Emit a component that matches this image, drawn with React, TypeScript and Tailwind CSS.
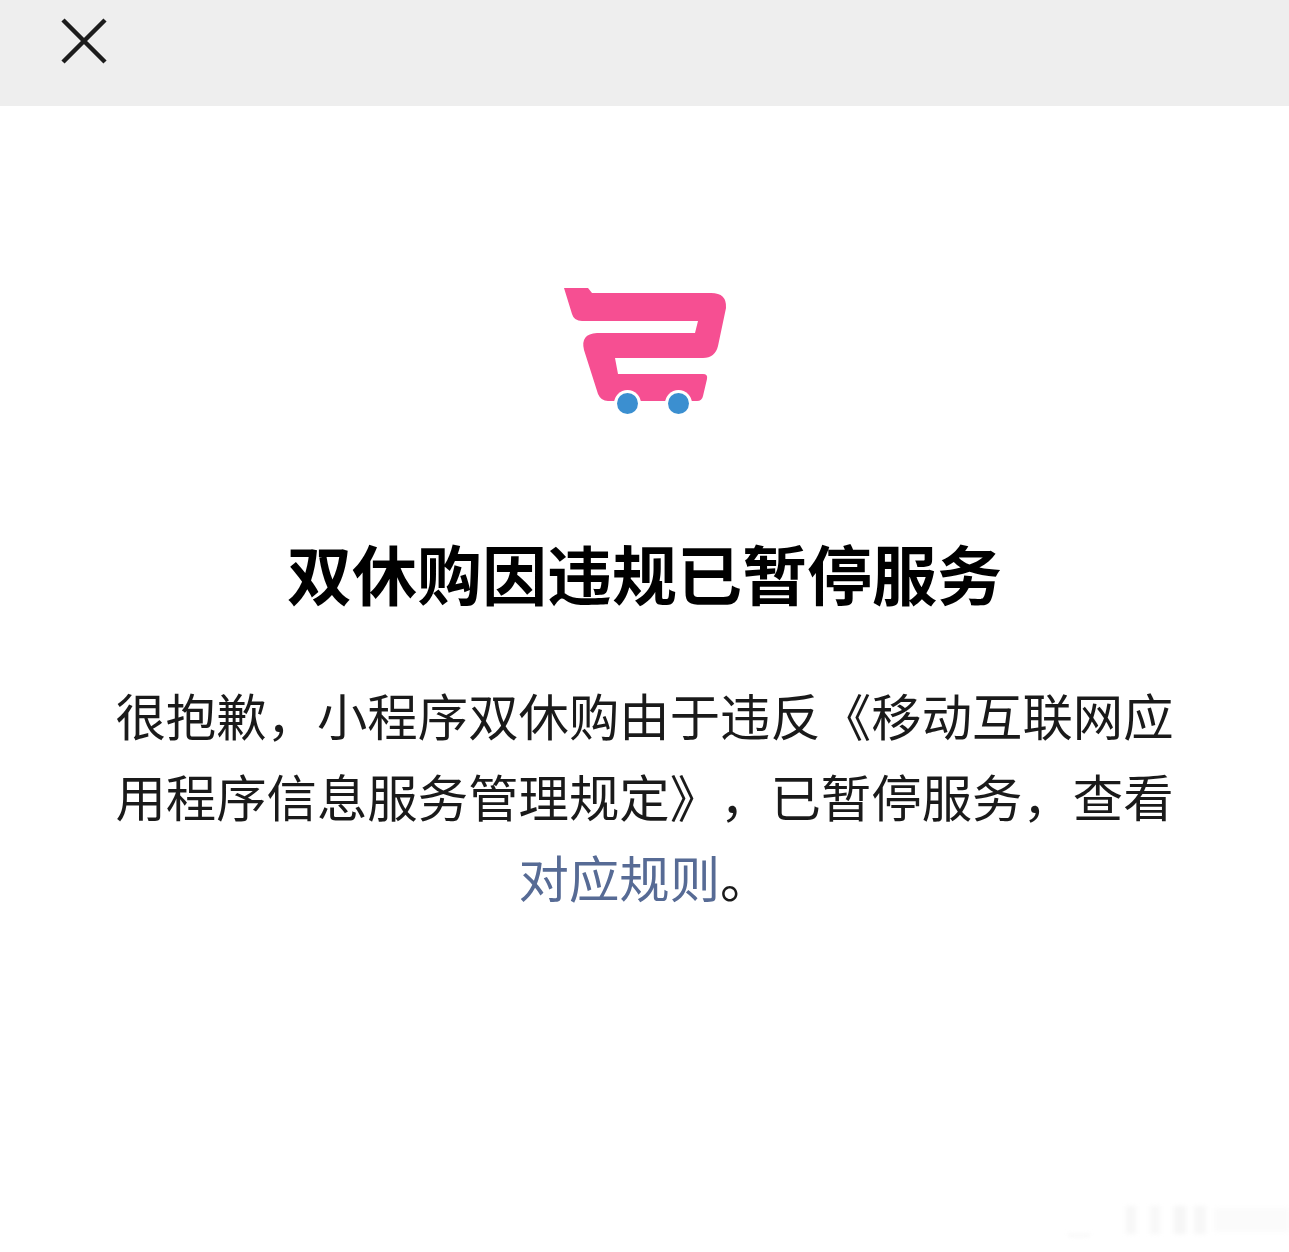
const Logo = () => (
  <svg width="170" height="130" viewBox="560 284 170 130" className="block">
    <path
      d="M564 288 L588 288 L592 293 L711 293 Q727 293 726 308 L718 346 Q715 358 703 358 L615 358 L618 374 L703 374 Q708 374 707 379 L703 396 Q702 401 697 401 L608 401 Q601 401 598 394 L584 350 Q580 334 597 333 L695 333 L698 321 L582 321 Q574 321 572 314 Z"
      fill="#f64f92"
    />
    <circle cx="627.5" cy="403.5" r="13.5" fill="#fff" />
    <circle cx="678.5" cy="403.5" r="13.5" fill="#fff" />
    <circle cx="627.5" cy="403.5" r="10.5" fill="#3b8fd0" />
    <circle cx="678.5" cy="403.5" r="10.5" fill="#3b8fd0" />
  </svg>
);

export default function App() {
  return (
    <div className="relative min-h-[1252px] bg-white font-['Noto_Sans_CJK_SC','Noto_Sans',sans-serif] [text-spacing-trim:space-all]">
      <div className="h-[106px] bg-[#eeeeee] pl-[61px] pt-[18px]">
        <svg width="46" height="46" viewBox="0 0 46 46" className="block">
          <path d="M2 2 L44 44 M44 2 L2 44" stroke="#1c1c1c" strokeWidth="4.5" fill="none" />
        </svg>
      </div>
      <div className="flex flex-col items-center pt-[178px]">
        <Logo />
        <h1 className="mt-[113px] text-[65px] leading-[90px] font-bold text-black whitespace-nowrap">
          双休购因违规已暂停服务
        </h1>
        <p className="mt-[57px] w-[1060px] text-[50.4px] leading-[81px] text-[#1a1a1a] text-center">
          很抱歉，小程序双休购由于违反《移动互联网应
          <br />
          用程序信息服务管理规定》，已暂停服务，查看
          <br />
          <span className="text-[#576b95]">对应规则</span>。
        </p>
      </div>
      {/* faint watermark bottom right */}
      <div className="absolute left-[1068px] top-[1204px] flex h-[32px] items-center blur-[2px]">
        <div className="mr-[36px] h-[32px] w-[22px] rounded-b-[4px] border-b border-[#e8e8e8]" />
        <div className="mr-[14px] h-[28px] w-[10px] bg-[#f7f7f7]" />
        <div className="mr-[14px] h-[28px] w-[10px] bg-[#f8f8f8]" />
        <div className="mr-[8px] h-[28px] w-[12px] bg-[#f6f6f6]" />
        <div className="mr-[8px] h-[28px] w-[12px] bg-[#f7f7f7]" />
        <div className="h-[24px] w-[75px] bg-[#fbfbfb]" />
      </div>
    </div>
  );
}
